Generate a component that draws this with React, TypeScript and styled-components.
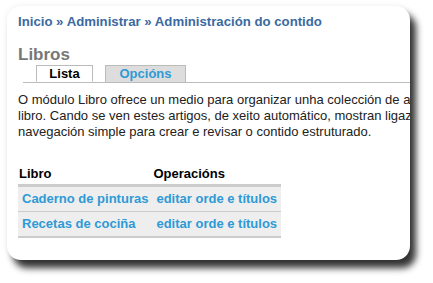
import React from "react";
import styled, { createGlobalStyle } from "styled-components";

const Global = createGlobalStyle`
  html, body {
    margin: 0;
    padding: 0;
    background: #fff;
  }
  body {
    font-family: "Liberation Sans", Arial, sans-serif;
  }
`;

const Stage = styled.div`
  width: 433px;
  height: 283px;
  padding: 6px 0 0 7px;
  box-sizing: border-box;
`;

const Card = styled.div`
  width: 403px;
  height: 254px;
  background: #fff;
  border-radius: 14px;
  overflow: hidden;
  box-shadow: 6px 8px 7px rgba(0, 0, 0, 0.8), 0 0 6px rgba(0, 0, 0, 0.07);
  padding: 8px 0 0 11px;
  box-sizing: border-box;
`;

const Inner = styled.div`
  width: 560px;
`;

const Breadcrumb = styled.div`
  font-size: 13.2px;
  font-weight: bold;
  color: #3b6aa0;
  line-height: 16px;
`;

const Crumb = styled.a`
  color: #3b6aa0;
  text-decoration: none;
`;

const Title = styled.h1`
  margin: 15px 0 0;
  font-size: 17px;
  line-height: 20px;
  color: #777;
  font-weight: bold;
`;

const Tabs = styled.ul`
  list-style: none;
  margin: 0 0 0 5px;
  padding: 0 0 0 13px;
  display: flex;
  gap: 12px;
  border-bottom: 1px solid #bbb;
  height: 17px;
`;

const Tab = styled.li<{ $active?: boolean }>`
  height: 17px;
  box-sizing: border-box;
  border: 1px solid #bbb;
  border-bottom: ${(p) => (p.$active ? "1px solid #fff" : "none")};
  background: ${(p) => (p.$active ? "#fff" : "#ddd")};
  color: ${(p) => (p.$active ? "#000" : "#2e9ad6")};
  font-size: 13px;
  font-weight: bold;
  line-height: 15px;
  text-align: center;
  width: ${(p) => (p.$active ? "57px" : "81px")};
`;

const Text = styled.p`
  margin: 9px 0 0;
  font-size: 13px;
  line-height: 16px;
  color: #222;
  white-space: nowrap;
`;

const Table = styled.table`
  margin-top: 26px;
  border-collapse: collapse;
  font-size: 13px;
`;

const Th = styled.th`
  text-align: left;
  font-weight: bold;
  color: #000;
  padding: 0 3px 2px 1px;
  line-height: 16px;
  border-bottom: 3px solid #ccc;
`;

const Row = styled.tr<{ $last?: boolean }>`
  background: #eee;
  border-bottom: ${(p) => (p.$last ? "2px solid #ccc" : "1px solid #ccc")};
`;

const Td = styled.td`
  padding: 4px;
  line-height: 16px;
  white-space: nowrap;
`;

const Link = styled.a`
  color: #2e9ad6;
  font-weight: bold;
  text-decoration: none;
`;

const books = ["Caderno de pinturas", "Recetas de cociña"];

export default function App() {
  return (
    <Stage>
      <Global />
      <Card>
        <Inner>
          <Breadcrumb>
            <Crumb>Inicio</Crumb> » <Crumb>Administrar</Crumb> »{" "}
            <Crumb>Administración do contido</Crumb>
          </Breadcrumb>
          <Title>Libros</Title>
          <Tabs>
            <Tab $active>Lista</Tab>
            <Tab>Opcións</Tab>
          </Tabs>
          <Text>
            O módulo Libro ofrece un medio para organizar unha colección de artigos
            nun
            <br />
            libro. Cando se ven estes artigos, de xeito automático, mostran ligazóns
            de
            <br />
            navegación simple para crear e revisar o contido estruturado.
          </Text>
          <Table>
            <thead>
              <tr>
                <Th>Libro</Th>
                <Th>Operacións</Th>
              </tr>
            </thead>
            <tbody>
              {books.map((b, i) => (
                <Row key={b} $last={i === books.length - 1}>
                  <Td>
                    <Link>{b}</Link>
                  </Td>
                  <Td>
                    <Link>editar orde e títulos</Link>
                  </Td>
                </Row>
              ))}
            </tbody>
          </Table>
        </Inner>
      </Card>
    </Stage>
  );
}
